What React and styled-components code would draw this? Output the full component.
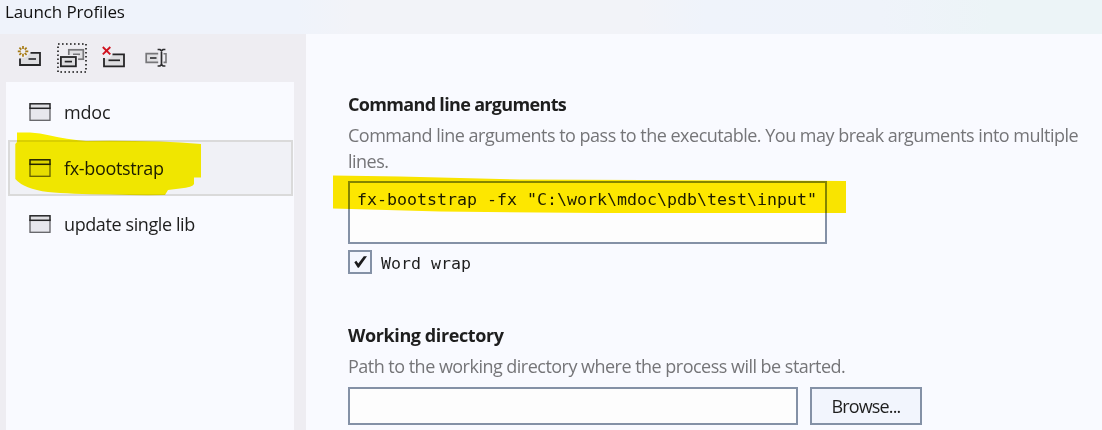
import React from "react";
import styled, { createGlobalStyle } from "styled-components";

const GlobalStyle = createGlobalStyle`
  * { box-sizing: border-box; }
  body {
    margin: 0;
    overflow: hidden;
    background: #f9faff;
    color: #1e1e1e;
    font-family: "Open Sans", "Noto Sans", sans-serif;
    font-size: 18px;
  }
`;

const Dialog = styled.div`
  position: relative;
  display: flex;
  flex-direction: column;
  width: 1102px;
  height: 430px;
  overflow: hidden;
`;

const TitleBar = styled.header`
  flex: none;
  height: 34px;
  padding-left: 5px;
  background: linear-gradient(90deg, #eff3fb 0%, #eff3fb 27%, #f2f3f8 32%, #f2f3f8 58%, #eff3fb 64%, #eff3fa 80%, #ecf4f7 90%);
  line-height: 24px;
  letter-spacing: ${(p) => p.$tracking}px;
  font-size: 17px;
  color: #111;
`;

const Body = styled.div`
  flex: 1;
  display: flex;
  min-height: 0;
`;

const Sidebar = styled.aside`
  flex: none;
  display: flex;
  flex-direction: column;
  width: 306px;
  padding: 0 12px 0 6px;
  background: #eeedf2;
`;

const Toolbar = styled.div`
  display: flex;
  gap: 12px;
  height: 48px;
  padding: 9px 0 0 9px;
`;

const ToolButton = styled.button`
  width: 30px;
  height: 30px;
  padding: 0;
  border: 0;
  background: none;
  svg { display: block; }
`;

const ProfileList = styled.div`
  flex: 1;
  padding: 2px 1px 0 2px;
  background: #f9faff;
`;

const ProfileRow = styled.div`
  display: flex;
  align-items: center;
  gap: 13px;
  height: 56px;
  padding-left: 19px;
  border: 2px solid ${(p) => (p.$selected ? "#dadada" : "transparent")};
  background: ${(p) => (p.$selected ? "#f0f1f6" : "transparent")};
  letter-spacing: ${(p) => p.$tracking}px;
`;

const Content = styled.main`
  flex: 1;
  min-width: 0;
  padding: 58px 0 0 42px;
`;

const Section = styled.section`
  height: ${(p) => p.$height}px;
`;

const Heading = styled.h2`
  margin: 0;
  height: 29px;
  font-size: 18px;
  font-weight: 700;
  line-height: 25px;
  letter-spacing: ${(p) => p.$tracking}px;
`;

const Description = styled.p`
  margin: 0;
  padding-top: 2px;
  height: ${(p) => p.$height}px;
  color: #757578;
  line-height: 25.5px;
  letter-spacing: ${(p) => p.$tracking}px;
  white-space: nowrap;
`;

const ArgumentsBox = styled.div`
  width: 479px;
  height: 63px;
  padding: 5px 7px;
  border: 2px solid #8491a6;
  background: #fdfdfd;
  font: 16.61px/24px "DejaVu Sans Mono", monospace;
  white-space: pre;
`;

const CheckRow = styled.label`
  display: flex;
  align-items: center;
  gap: 9px;
  height: 24px;
  margin-top: 6px;
  font: 16.61px/24px "DejaVu Sans Mono", monospace;
`;

const CheckLabel = styled.span`
  padding-top: 3px;
`;

const CheckBox = styled.span`
  width: 24px;
  height: 24px;
  border: 2px solid #8491a6;
  background: #f3f6fe;
  svg { display: block; }
`;

const FieldRow = styled.div`
  display: flex;
  gap: 12px;
  height: 38px;
`;

const PathField = styled.div`
  width: 450px;
  border: 2px solid #8491a6;
  background: #fdfdfd;
`;

const BrowseButton = styled.button`
  width: 112px;
  padding: 0;
  border: 2px solid #8491a6;
  background: #f2f5fd;
  color: #1e1e1e;
  font: inherit;
  line-height: 34px;
  letter-spacing: ${(p) => p.$tracking}px;
`;

const Marker = styled.svg`
  position: absolute;
  inset: 0;
  mix-blend-mode: multiply;
  pointer-events: none;
`;

const NewIcon = () => (
  <svg width="30" height="30" viewBox="15 43 30 30" fill="none">
    <path d="M30 53H40V65H20V58L25 57L30 53Z" fill="#dddde0" />
    <path d="M30.5 52.8H40V65H20V58.5" stroke="#252527" strokeWidth="1.8" />
    <path d="M28.5 59H36" stroke="#252527" strokeWidth="1.6" />
    <circle cx="23" cy="51.3" r="6.5" fill="#eeedf2" />
    <path d="M23 46V49M23 53.7V56.7M17.8 51.3H20.7M25.3 51.3H28.3M19.4 47.7L21.3 49.6M24.7 53L26.6 54.9M26.6 47.7L24.7 49.6M21.3 53L19.4 54.9" stroke="#a67a12" strokeWidth="1.7" />
  </svg>
);

const DuplicateIcon = () => (
  <svg width="30" height="30" viewBox="57 43 30 30" fill="none">
    <rect x="58" y="44" width="28" height="28" stroke="#151515" strokeWidth="1.6" strokeDasharray="1.6 2.4" />
    <rect x="68.8" y="49.8" width="14.5" height="9.4" fill="#e0e0e3" stroke="#77777a" strokeWidth="1.7" />
    <path d="M73 54.3H80" stroke="#77777a" strokeWidth="1.6" />
    <rect x="58.9" y="55" width="19.2" height="13.3" fill="#eeedf2" />
    <rect x="60.9" y="57" width="15" height="9.3" fill="#dddde0" stroke="#252527" strokeWidth="1.8" />
    <path d="M64.7 61.6H72" stroke="#252527" strokeWidth="1.7" />
  </svg>
);

const DeleteIcon = () => (
  <svg width="30" height="30" viewBox="99 43 30 30" fill="none">
    <path d="M113 54H124V66H104V59L110 58L113 54Z" fill="#dddde0" />
    <path d="M112.5 54.3H124V66.3H104V58" stroke="#252527" strokeWidth="1.8" />
    <path d="M108.5 60.3H120" stroke="#252527" strokeWidth="1.7" />
    <path d="M102.8 47L110.3 54.4M110.3 47L102.8 54.4" stroke="#d0121f" strokeWidth="1.9" />
  </svg>
);

const RenameIcon = () => (
  <svg width="30" height="30" viewBox="141 43 30 30" fill="none">
    <path d="M158.2 53.7H146.2V62.4H158.2" fill="#e0e0e3" stroke="#77777a" strokeWidth="1.7" />
    <path d="M163.5 53.7H166V62.4H163.5" stroke="#77777a" strokeWidth="1.6" />
    <path d="M150 58H156.5" stroke="#4f4f52" strokeWidth="2" />
    <path d="M157.6 49.5H160L161.5 50.8L163 49.5H165.4M161.5 50.5V65M157.6 66H160L161.5 64.7L163 66H165.4" stroke="#2c2c2e" strokeWidth="1.7" />
  </svg>
);

const WindowIcon = () => (
  <svg width="22" height="18" viewBox="0 0 22 18" fill="none">
    <rect x="1" y="5" width="20" height="12.3" fill="#e7e7ed" stroke="#626266" strokeWidth="1.3" />
    <rect x="1" y="0.8" width="20" height="4.5" fill="#dedee2" stroke="#242426" strokeWidth="1.5" />
  </svg>
);

const tools = [
  ["New", NewIcon],
  ["Duplicate", DuplicateIcon],
  ["Delete", DeleteIcon],
  ["Rename", RenameIcon],
];

const profiles = [
  { name: "mdoc", tracking: -0.2 },
  { name: "fx-bootstrap", tracking: -0.34, selected: true },
  { name: "update single lib", tracking: -0.4 },
];

export default function App() {
  return (
    <Dialog>
      <GlobalStyle />
      <TitleBar $tracking={-0.11}>Launch Profiles</TitleBar>
      <Body>
        <Sidebar>
          <Toolbar>
            {tools.map(([name, Icon]) => (
              <ToolButton key={name}><Icon /></ToolButton>
            ))}
          </Toolbar>
          <ProfileList>
            {profiles.map((p) => (
              <ProfileRow key={p.name} $selected={p.selected} $tracking={p.tracking}>
                <WindowIcon />
                <span>{p.name}</span>
              </ProfileRow>
            ))}
          </ProfileList>
        </Sidebar>
        <Content>
          <Section $height={231}>
            <Heading $tracking={-0.67}>Command line arguments</Heading>
            <Description $height={60} $tracking={-0.505}>
              Command line arguments to pass to the executable. You may break arguments into multiple
              <br />
              lines.
            </Description>
            <ArgumentsBox>{'fx-bootstrap -fx "C:\\work\\mdoc\\pdb\\test\\input"'}</ArgumentsBox>
            <CheckRow>
              <CheckBox>
                <svg width="20" height="20" viewBox="0 0 20 20">
                  <path d="M4.3 10.2L6.3 8.8L8.3 11.6L13.8 4.2H17L8.8 15.8H7.8Z" fill="#1b1b1d" />
                </svg>
              </CheckBox>
              <CheckLabel>Word wrap</CheckLabel>
            </CheckRow>
          </Section>
          <Section $height={107}>
            <Heading $tracking={-0.4}>Working directory</Heading>
            <Description $height={35} $tracking={-0.52}>
              Path to the working directory where the process will be started.
            </Description>
            <FieldRow>
              <PathField />
              <BrowseButton $tracking={-0.85}>Browse...</BrowseButton>
            </FieldRow>
          </Section>
        </Content>
      </Body>
      <Marker width="1102" height="430" viewBox="0 0 1102 430">
        <path d="M17 132.5H30Q40 133 50 135.5Q66 139 86 141Q120 140.5 160 141.5Q180 142 201 144V177.5H194V184Q193 187 180 188.5L168 190L165 195Q140 195.500 110 194.500Q70 194 48 192Q24 189 15.300 179V144L17 142Z" fill="#fff400" />
        <path d="M333 175.500L400 176.500L520 179.500L846 181V213H600L440 211.500L333 208.500Z" fill="#ffe900" />
      </Marker>
    </Dialog>
  );
}
